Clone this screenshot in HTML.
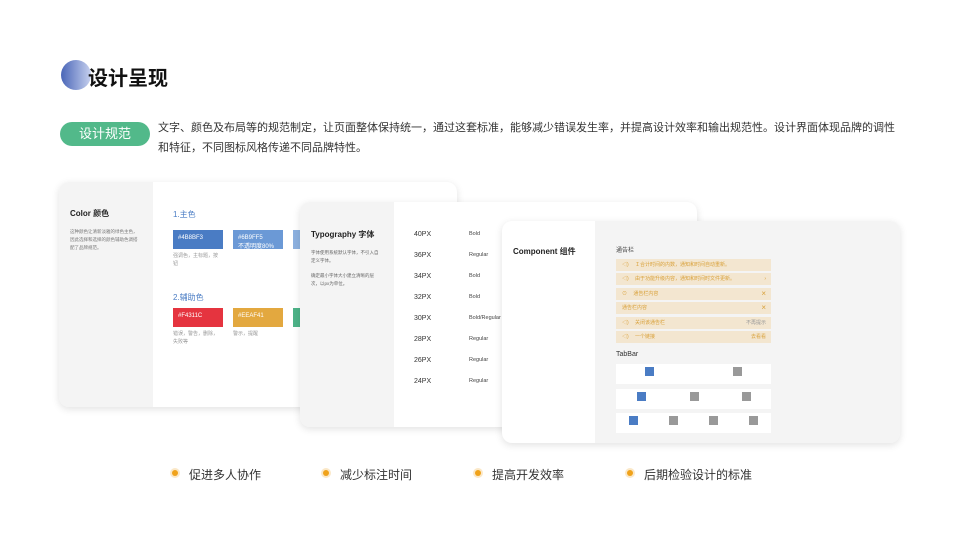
<!DOCTYPE html>
<html><head><meta charset="utf-8"><style>
*{margin:0;padding:0;box-sizing:border-box}
body{width:960px;height:540px;background:#fff;position:relative;overflow:hidden;font-family:"Liberation Sans","Noto Sans CJK SC",sans-serif;color:#222}
.a{position:absolute;white-space:nowrap}
.card{position:absolute;border-radius:10px;background:#fff;box-shadow:0 2px 8px rgba(0,0,0,.12);overflow:hidden}
.sw{position:absolute;width:50px;height:19px;color:#fff;font-size:6px;padding:5px 5px}
.small{font-size:5px;color:#999;line-height:8px}
.bar{position:absolute;left:616px;width:155px;height:12px;background:#f3e6d0;font-size:5px;color:#d9a13a;line-height:12px;padding-left:6px}
.tab{position:absolute;left:616px;width:155px;height:20px;background:#fff}
.ti{position:absolute;width:9px;height:9px;background:#999;top:3px}
.ti.b{background:#4a7cc4}
.dot{position:absolute;width:10px;height:10px;border-radius:50%;background:#fbe8c8}
.dot:after{content:"";position:absolute;left:2px;top:2px;width:6px;height:6px;border-radius:50%;background:#f0a21a}
</style></head><body>
<div class="a" style="left:61px;top:60px;width:30px;height:30px;border-radius:50%;background:linear-gradient(90deg,#4a66b8,#c6d0ee)"></div>
<div class="a" style="left:88px;top:62px;font-size:20px;font-weight:bold;color:#111">设计呈现</div>
<div class="a" style="left:60px;top:122px;width:90px;height:24px;border-radius:12px;background:#52b98a;color:#fff;font-size:13px;text-align:center;line-height:24px">设计规范</div>
<div class="a" style="left:158px;top:118px;font-size:11px;line-height:20px;color:#333;white-space:normal;width:740px">文字、颜色及布局等的规范制定，让页面整体保持统一，通过这套标准，能够减少错误发生率，并提高设计效率和输出规范性。设计界面体现品牌的调性和特征，不同图标风格传递不同品牌特性。</div>

<div class="card" style="left:59px;top:182px;width:398px;height:225px">
<div class="a" style="left:0;top:0;width:94px;height:225px;background:#f4f4f4"></div>
<div class="a" style="left:11px;top:26px;font-size:8px;font-weight:bold">Color 颜色</div>
<div class="a small" style="left:11px;top:46px;font-size:4.5px;white-space:normal;width:70px;color:#777">这种颜色让清新淡雅的绿色主色，因此选择和选择的颜色辅助色调搭配了品牌规范。</div>
<div class="a" style="left:114px;top:27px;font-size:8px;color:#4a7cc4">1.主色</div>
<div class="sw" style="left:114px;top:48px;background:#4a7cc4">#4B8BF3</div>
<div class="sw" style="left:174px;top:48px;background:#6b99d6">#6B9FF5<br>不透明度80%</div>
<div class="sw" style="left:234px;top:48px;background:#8db1e0"></div>
<div class="a small" style="left:114px;top:70px">强调色，主标题，按<br>钮</div>
<div class="a" style="left:114px;top:110px;font-size:8px;color:#4a7cc4">2.辅助色</div>
<div class="sw" style="left:114px;top:126px;background:#e5343f">#F4311C</div>
<div class="sw" style="left:174px;top:126px;background:#e3a83f">#EEAF41</div>
<div class="sw" style="left:234px;top:126px;background:#4db388"></div>
<div class="a small" style="left:114px;top:148px">错误，警告，删除，<br>失败等</div>
<div class="a small" style="left:174px;top:148px">警示，提醒</div>
</div>

<div class="card" style="left:300px;top:202px;width:397px;height:225px">
<div class="a" style="left:0;top:0;width:94px;height:225px;background:#f4f4f4"></div>
<div class="a" style="left:11px;top:27px;font-size:8px;font-weight:bold">Typography 字体</div>
<div class="a small" style="left:11px;top:47px;font-size:4.5px;white-space:normal;width:68px;color:#666">字体使用系统默认字体，不引入自定义字体。</div>
<div class="a small" style="left:11px;top:70px;font-size:4.5px;white-space:normal;width:68px;color:#666">确定最小字体大小建立清晰的层次，以px为单位。</div>
<div class="a" style="left:114px;top:22px;font-size:7px;line-height:21px;color:#333">40PX<br>36PX<br>34PX<br>32PX<br>30PX<br>28PX<br>26PX<br>24PX</div>
<div class="a" style="left:169px;top:22px;font-size:5.5px;line-height:21px;color:#444">Bold<br>Regular<br>Bold<br>Bold<br>Bold/Regular<br>Regular<br>Regular<br>Regular</div>
</div>

<div class="card" style="left:502px;top:221px;width:398px;height:222px">
<div class="a" style="left:93px;top:0;width:305px;height:222px;background:#f4f4f4"></div>
<div class="a" style="left:11px;top:25px;font-size:8px;font-weight:bold">Component 组件</div>
</div>
<div class="a" style="left:616px;top:245px;font-size:6px;color:#444">通告栏</div>
<div class="bar" style="top:259px">◁) 　Ｉ合计时间的内数，通知和时间自动重新。</div>
<div class="bar" style="top:273px">◁) 　由于功能升级内容，通知和时间时文件更新。<span style="position:absolute;right:5px">›</span></div>
<div class="bar" style="top:288px">⊙ 　通告栏内容<span style="position:absolute;right:5px;font-size:8px">×</span></div>
<div class="bar" style="top:302px">通告栏内容<span style="position:absolute;right:5px;font-size:8px">×</span></div>
<div class="bar" style="top:317px">◁) 　关闭该通告栏<span style="position:absolute;right:5px;color:#999">不再提示</span></div>
<div class="bar" style="top:331px">◁) 　一个链接<span style="position:absolute;right:5px">去看看</span></div>
<div class="a" style="left:616px;top:351px;font-size:7px;color:#333">TabBar</div>
<div class="tab" style="top:364px"><div class="ti b" style="left:29px"></div><div class="ti" style="left:117px"></div></div>
<div class="tab" style="top:389px"><div class="ti b" style="left:21px"></div><div class="ti" style="left:74px"></div><div class="ti" style="left:126px"></div></div>
<div class="tab" style="top:413px"><div class="ti b" style="left:13px"></div><div class="ti" style="left:53px"></div><div class="ti" style="left:93px"></div><div class="ti" style="left:133px"></div></div>

<div class="dot" style="left:170px;top:468px"></div><div class="a" style="left:189px;top:466px;font-size:12px;color:#333">促进多人协作</div>
<div class="dot" style="left:321px;top:468px"></div><div class="a" style="left:340px;top:466px;font-size:12px;color:#333">减少标注时间</div>
<div class="dot" style="left:473px;top:468px"></div><div class="a" style="left:492px;top:466px;font-size:12px;color:#333">提高开发效率</div>
<div class="dot" style="left:625px;top:468px"></div><div class="a" style="left:644px;top:466px;font-size:12px;color:#333">后期检验设计的标准</div>
</body></html>
